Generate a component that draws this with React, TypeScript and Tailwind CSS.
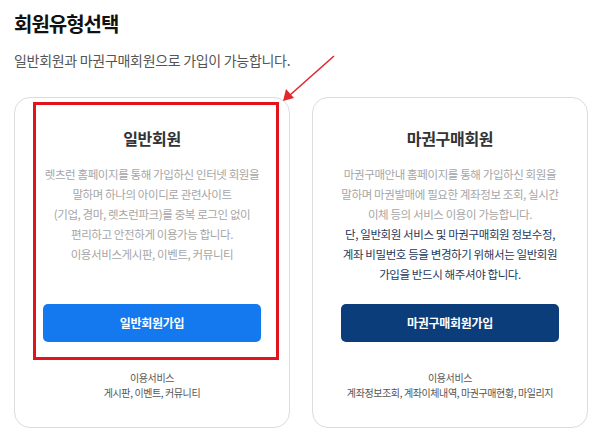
import React from "react";

const font = { fontFamily: '"Noto Sans CJK KR", "Noto Sans", sans-serif' };

export default function App() {
  return (
    <div className="relative w-[600px] h-[435px] bg-white overflow-hidden" style={font}>
      <div className="pl-[14px] pt-[9px]">
        <h1 className="text-[20px] leading-[30px] font-bold text-[#111] tracking-[-1px]">회원유형선택</h1>
        <p className="mt-[11px] text-[14px] leading-[20px] text-[#555] tracking-[-0.3px]">
          일반회원과 마권구매회원으로 가입이 가능합니다.
        </p>
        <div className="mt-[27px] flex gap-[22px]">
          <div className="relative w-[276px] h-[331px] rounded-[16px] border border-[#dcdcdc] flex flex-col items-center pt-[27px] pb-[27px] px-[28px]">
            <div className="text-[16px] leading-[26px] font-bold text-[#333] tracking-[-0.3px]">일반회원</div>
            <div className="mt-[13px] text-[11.5px] leading-[20px] text-[#a6a6a6] text-center tracking-[-0.4px]">
              <p>렛츠런 홈페이지를 통해 가입하신 인터넷 회원을</p>
              <p>말하며 하나의 아이디로 관련사이트</p>
              <p>(기업, 경마, 렛츠런파크)를 중복 로그인 없이</p>
              <p>편리하고 안전하게 이용가능 합니다.</p>
              <p>이용서비스게시판, 이벤트, 커뮤니티</p>
            </div>
            <div className="flex-1" />
            <button className="w-full h-[38px] rounded-[5px] bg-[#1479ee] text-white text-[12px] font-bold tracking-[-0.3px]">
              일반회원가입
            </button>
            <div className="mt-[28px] text-[10px] leading-[15px] text-[#555] text-center tracking-[-0.4px]">
              <p>이용서비스</p>
              <p>게시판, 이벤트, 커뮤니티</p>
            </div>
            <div className="absolute left-[18px] top-[4px] w-[246px] h-[258px] border-[3px] border-[#e3131c] pointer-events-none" />
          </div>
          <div className="w-[276px] h-[331px] rounded-[16px] border border-[#dcdcdc] flex flex-col items-center pt-[27px] pb-[27px] px-[28px]">
            <div className="text-[16px] leading-[26px] font-bold text-[#333] tracking-[-0.3px]">마권구매회원</div>
            <div className="mt-[13px] text-[11.5px] leading-[20px] text-center tracking-[-0.4px]">
              <p className="text-[#a6a6a6]">마권구매안내 홈페이지를 통해 가입하신 회원을</p>
              <p className="text-[#a6a6a6]">말하며 마권발매에 필요한 계좌정보 조회, 실시간</p>
              <p className="text-[#a6a6a6]">이체 등의 서비스 이용이 가능합니다.</p>
              <p className="text-[#26395c]">단, 일반회원 서비스 및 마권구매회원 정보수정,</p>
              <p className="text-[#26395c]">계좌 비밀번호 등을 변경하기 위해서는 일반회원</p>
              <p className="text-[#26395c]">가입을 반드시 해주셔야 합니다.</p>
            </div>
            <div className="flex-1" />
            <button className="w-full h-[38px] rounded-[5px] bg-[#0b3d7b] text-white text-[12px] font-bold tracking-[-0.3px]">
              마권구매회원가입
            </button>
            <div className="mt-[28px] text-[10px] leading-[15px] text-[#555] text-center tracking-[-0.4px]">
              <p>이용서비스</p>
              <p>계좌정보조회, 계좌이체내역, 마권구매현황, 마일리지</p>
            </div>
          </div>
        </div>
      </div>
      <svg className="absolute left-0 top-0 pointer-events-none" width="600" height="435">
        <line x1="334" y1="56" x2="290" y2="95" stroke="#e0282e" strokeWidth="1.6" />
        <polygon points="283,101 286,89 294,98" fill="#e0282e" />
      </svg>
    </div>
  );
}
